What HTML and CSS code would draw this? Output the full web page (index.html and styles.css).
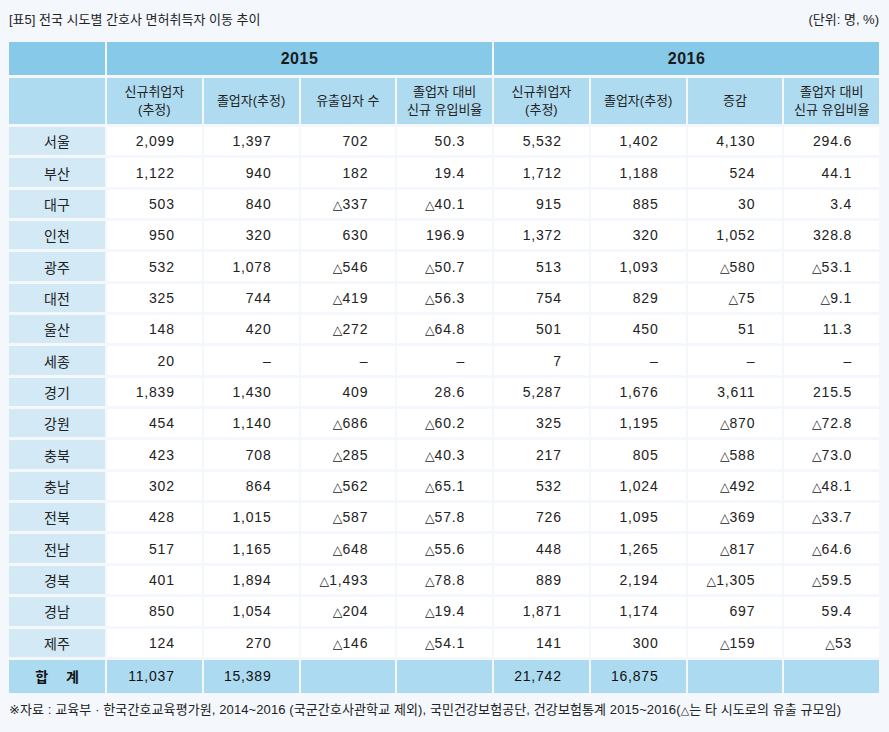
FILE: index.html
```html
<!DOCTYPE html>
<html lang="ko">
<head>
<meta charset="utf-8">
<title>전국 시도별 간호사 면허취득자 이동 추이</title>
<link rel="stylesheet" href="styles.css">
</head>
<body>
<div class="page">
  <div class="caption">
    <span class="title">[표5] 전국 시도별 간호사 면허취득자 이동 추이</span>
    <span class="unit">(단위: 명, %)</span>
  </div>
  <table class="stats">
    <colgroup>
      <col class="c-region">
      <col span="8" class="c-val">
    </colgroup>
    <thead>
      <tr class="h-year">
        <th></th>
        <th colspan="4">2015</th>
        <th colspan="4">2016</th>
      </tr>
      <tr class="h-sub">
        <th></th>
        <th>신규취업자<br>(추정)</th>
        <th>졸업자(추정)</th>
        <th>유출입자 수</th>
        <th>졸업자 대비<br>신규 유입비율</th>
        <th>신규취업자<br>(추정)</th>
        <th>졸업자(추정)</th>
        <th>증감</th>
        <th>졸업자 대비<br>신규 유입비율</th>
      </tr>
    </thead>
    <tbody>
      <tr><th>서울</th><td>2,099</td><td>1,397</td><td>702</td><td>50.3</td><td>5,532</td><td>1,402</td><td>4,130</td><td>294.6</td></tr>
      <tr><th>부산</th><td>1,122</td><td>940</td><td>182</td><td>19.4</td><td>1,712</td><td>1,188</td><td>524</td><td>44.1</td></tr>
      <tr><th>대구</th><td>503</td><td>840</td><td><span class="tri">△</span>337</td><td><span class="tri">△</span>40.1</td><td>915</td><td>885</td><td>30</td><td>3.4</td></tr>
      <tr><th>인천</th><td>950</td><td>320</td><td>630</td><td>196.9</td><td>1,372</td><td>320</td><td>1,052</td><td>328.8</td></tr>
      <tr><th>광주</th><td>532</td><td>1,078</td><td><span class="tri">△</span>546</td><td><span class="tri">△</span>50.7</td><td>513</td><td>1,093</td><td><span class="tri">△</span>580</td><td><span class="tri">△</span>53.1</td></tr>
      <tr><th>대전</th><td>325</td><td>744</td><td><span class="tri">△</span>419</td><td><span class="tri">△</span>56.3</td><td>754</td><td>829</td><td><span class="tri">△</span>75</td><td><span class="tri">△</span>9.1</td></tr>
      <tr><th>울산</th><td>148</td><td>420</td><td><span class="tri">△</span>272</td><td><span class="tri">△</span>64.8</td><td>501</td><td>450</td><td>51</td><td>11.3</td></tr>
      <tr><th>세종</th><td>20</td><td>–</td><td>–</td><td>–</td><td>7</td><td>–</td><td>–</td><td>–</td></tr>
      <tr><th>경기</th><td>1,839</td><td>1,430</td><td>409</td><td>28.6</td><td>5,287</td><td>1,676</td><td>3,611</td><td>215.5</td></tr>
      <tr><th>강원</th><td>454</td><td>1,140</td><td><span class="tri">△</span>686</td><td><span class="tri">△</span>60.2</td><td>325</td><td>1,195</td><td><span class="tri">△</span>870</td><td><span class="tri">△</span>72.8</td></tr>
      <tr><th>충북</th><td>423</td><td>708</td><td><span class="tri">△</span>285</td><td><span class="tri">△</span>40.3</td><td>217</td><td>805</td><td><span class="tri">△</span>588</td><td><span class="tri">△</span>73.0</td></tr>
      <tr><th>충남</th><td>302</td><td>864</td><td><span class="tri">△</span>562</td><td><span class="tri">△</span>65.1</td><td>532</td><td>1,024</td><td><span class="tri">△</span>492</td><td><span class="tri">△</span>48.1</td></tr>
      <tr><th>전북</th><td>428</td><td>1,015</td><td><span class="tri">△</span>587</td><td><span class="tri">△</span>57.8</td><td>726</td><td>1,095</td><td><span class="tri">△</span>369</td><td><span class="tri">△</span>33.7</td></tr>
      <tr><th>전남</th><td>517</td><td>1,165</td><td><span class="tri">△</span>648</td><td><span class="tri">△</span>55.6</td><td>448</td><td>1,265</td><td><span class="tri">△</span>817</td><td><span class="tri">△</span>64.6</td></tr>
      <tr><th>경북</th><td>401</td><td>1,894</td><td><span class="tri">△</span>1,493</td><td><span class="tri">△</span>78.8</td><td>889</td><td>2,194</td><td><span class="tri">△</span>1,305</td><td><span class="tri">△</span>59.5</td></tr>
      <tr><th>경남</th><td>850</td><td>1,054</td><td><span class="tri">△</span>204</td><td><span class="tri">△</span>19.4</td><td>1,871</td><td>1,174</td><td>697</td><td>59.4</td></tr>
      <tr><th>제주</th><td>124</td><td>270</td><td><span class="tri">△</span>146</td><td><span class="tri">△</span>54.1</td><td>141</td><td>300</td><td><span class="tri">△</span>159</td><td><span class="tri">△</span>53</td></tr>
    </tbody>
    <tfoot>
      <tr class="total"><th>합 계</th><td>11,037</td><td>15,389</td><td></td><td></td><td>21,742</td><td>16,875</td><td></td><td></td></tr>
    </tfoot>
  </table>
  <p class="source">※자료 : 교육부 · 한국간호교육평가원, 2014~2016 (국군간호사관학교 제외), 국민건강보험공단, 건강보험통계 2015~2016(<span class="tri-s">△</span>는 타 시도로의 유출 규모임)</p>
</div>
</body>
</html>
```

FILE: styles.css
```css
html, body {
  margin: 0;
  padding: 0;
  background: #f4f8fc;
}

body {
  font-family: "Liberation Sans", "DejaVu Sans", "Noto Sans CJK KR", sans-serif;
  color: #222;
}

.page {
  width: 889px;
  height: 732px;
  padding: 8px 0 0 0;
  box-sizing: border-box;
}

.caption {
  display: flex;
  justify-content: space-between;
  align-items: center;
  height: 20px;
  padding: 0 10px 0 9px;
  font-size: 13px;
  color: #222;
}

.stats {
  border-collapse: separate;
  border-spacing: 2px 3px;
  table-layout: fixed;
  width: 874px;
  margin: 11px 0 0 7px;
  font-size: 14px;
  letter-spacing: 0.8px;
}

.c-region { width: 96px; }
.c-val { width: 94.75px; }

.stats th,
.stats td {
  padding: 0;
  font-weight: normal;
}

.stats .h-year th {
  height: 33px;
  background: #87c9e8;
  font-size: 16px;
  font-weight: bold;
  letter-spacing: 0.5px;
  text-align: center;
  color: #1a1a1a;
}

.stats .h-sub th {
  height: 46px;
  background: #afdbf0;
  font-size: 13px;
  line-height: 18px;
  letter-spacing: 0;
  text-align: center;
  color: #222;
}

.stats tbody th {
  height: 28.35px;
  background: #d3e9f6;
  font-size: 14px;
  letter-spacing: 0;
  text-align: center;
}

.stats tbody td {
  background: #ffffff;
  text-align: right;
  padding-right: 27px;
}

.tri {
  font-family: "DejaVu Sans", sans-serif;
  font-size: 12.5px;
  letter-spacing: 0;
}

.tri-s {
  font-family: "DejaVu Sans", sans-serif;
  font-size: 11px;
}

.stats .total th,
.stats .total td {
  height: 33px;
  background: #acdaf0;
  color: #111;
}

.stats .total th {
  font-weight: bold;
  text-align: center;
  word-spacing: 14px;
  letter-spacing: 0;
}

.stats .total td {
  text-align: right;
  padding-right: 27px;
}

.source {
  margin: 6px 0 0 9px;
  font-size: 13px;
  line-height: 16px;
  letter-spacing: 0.1px;
  color: #222;
}
```
